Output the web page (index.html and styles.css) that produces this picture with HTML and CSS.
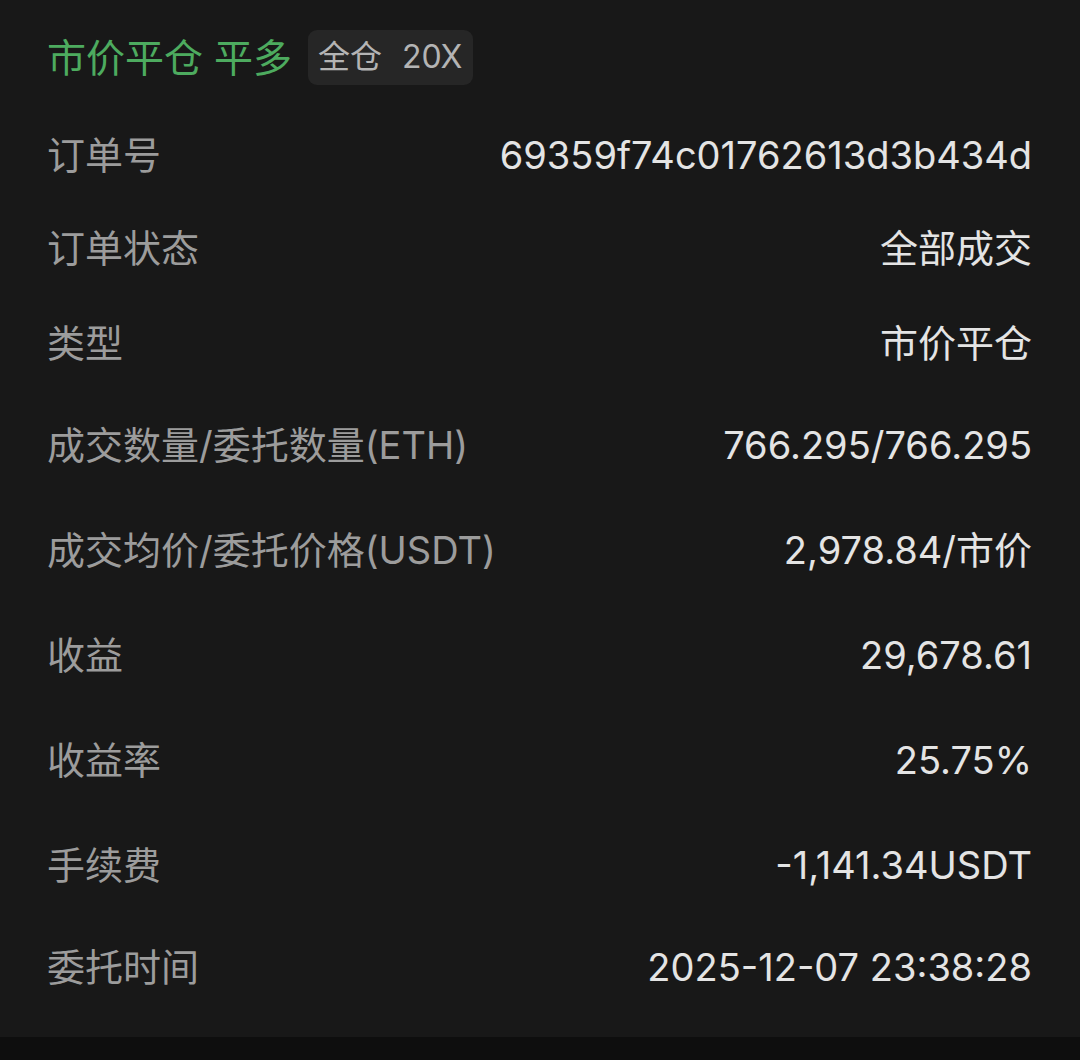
FILE: index.html
```html
<!DOCTYPE html>
<html lang="zh-CN">
    <head>
        <meta charset="utf-8">
        <title>订单详情</title>
        <link rel="stylesheet" href="styles.css">
    </head>

    <body>
        <div class="orderCard">
            <div class="orderHead">
                <span class="orderTitle">市价平仓 平多</span>
                <span class="marginTag">全仓<span class="lever">20X</span></span>
            </div>

            <div class="row short">
                <span class="label">订单号</span>
                <span class="value">69359f74c01762613d3b434d</span>
            </div>
            <div class="row short">
                <span class="label">订单状态</span>
                <span class="value">全部成交</span>
            </div>
            <div class="row mid">
                <span class="label">类型</span>
                <span class="value">市价平仓</span>
            </div>
            <div class="row">
                <span class="label">成交数量/委托数量(ETH)</span>
                <span class="value">766.295/766.295</span>
            </div>
            <div class="row">
                <span class="label">成交均价/委托价格(USDT)</span>
                <span class="value">2,978.84/市价</span>
            </div>
            <div class="row">
                <span class="label">收益</span>
                <span class="value">29,678.61</span>
            </div>
            <div class="row">
                <span class="label">收益率</span>
                <span class="value">25.75%</span>
            </div>
            <div class="row">
                <span class="label">手续费</span>
                <span class="value">-1,141.34USDT</span>
            </div>
            <div class="row last">
                <span class="label">委托时间</span>
                <span class="value">2025-12-07 23:38:28</span>
            </div>
        </div>
        <div class="footerStrip"></div>
    </body>
</html>
```

FILE: styles.css
```css
html, body {
    margin: 0;
    padding: 0;
    background-color: #0e0e0e;
}

body {
    font-family: Inter, "Noto Sans CJK SC", sans-serif;
}

.orderCard {
    background-color: #181818;
    padding: 0 48px 0 47px;
    height: 1037px;
    box-sizing: border-box;
}

.orderHead {
    display: flex;
    align-items: center;
    gap: 16px;
    height: 108px;
    padding-top: 6px;
    box-sizing: border-box;
}

.orderTitle {
    color: #4dab5f;
    font-size: 39px;
    line-height: 1;
}

.marginTag {
    display: flex;
    align-items: center;
    gap: 20px;
    height: 55px;
    padding: 0 11px 0 10px;
    background-color: #262626;
    border-radius: 9px;
    color: #b4b4b4;
    font-size: 32px;
    line-height: 1;
    box-sizing: border-box;
}

.row {
    display: flex;
    align-items: center;
    justify-content: space-between;
    height: 105px;
    font-size: 38px;
    line-height: 1;
}

.row.short {
    height: 93px;
}

.row.mid {
    height: 98px;
}

.row.last {
    height: 100px;
}

.label {
    color: #9c9c9c;
}

.value {
    color: #e4e4e4;
}

.footerStrip {
    height: 23px;
    background-color: #0e0e0e;
}
```
